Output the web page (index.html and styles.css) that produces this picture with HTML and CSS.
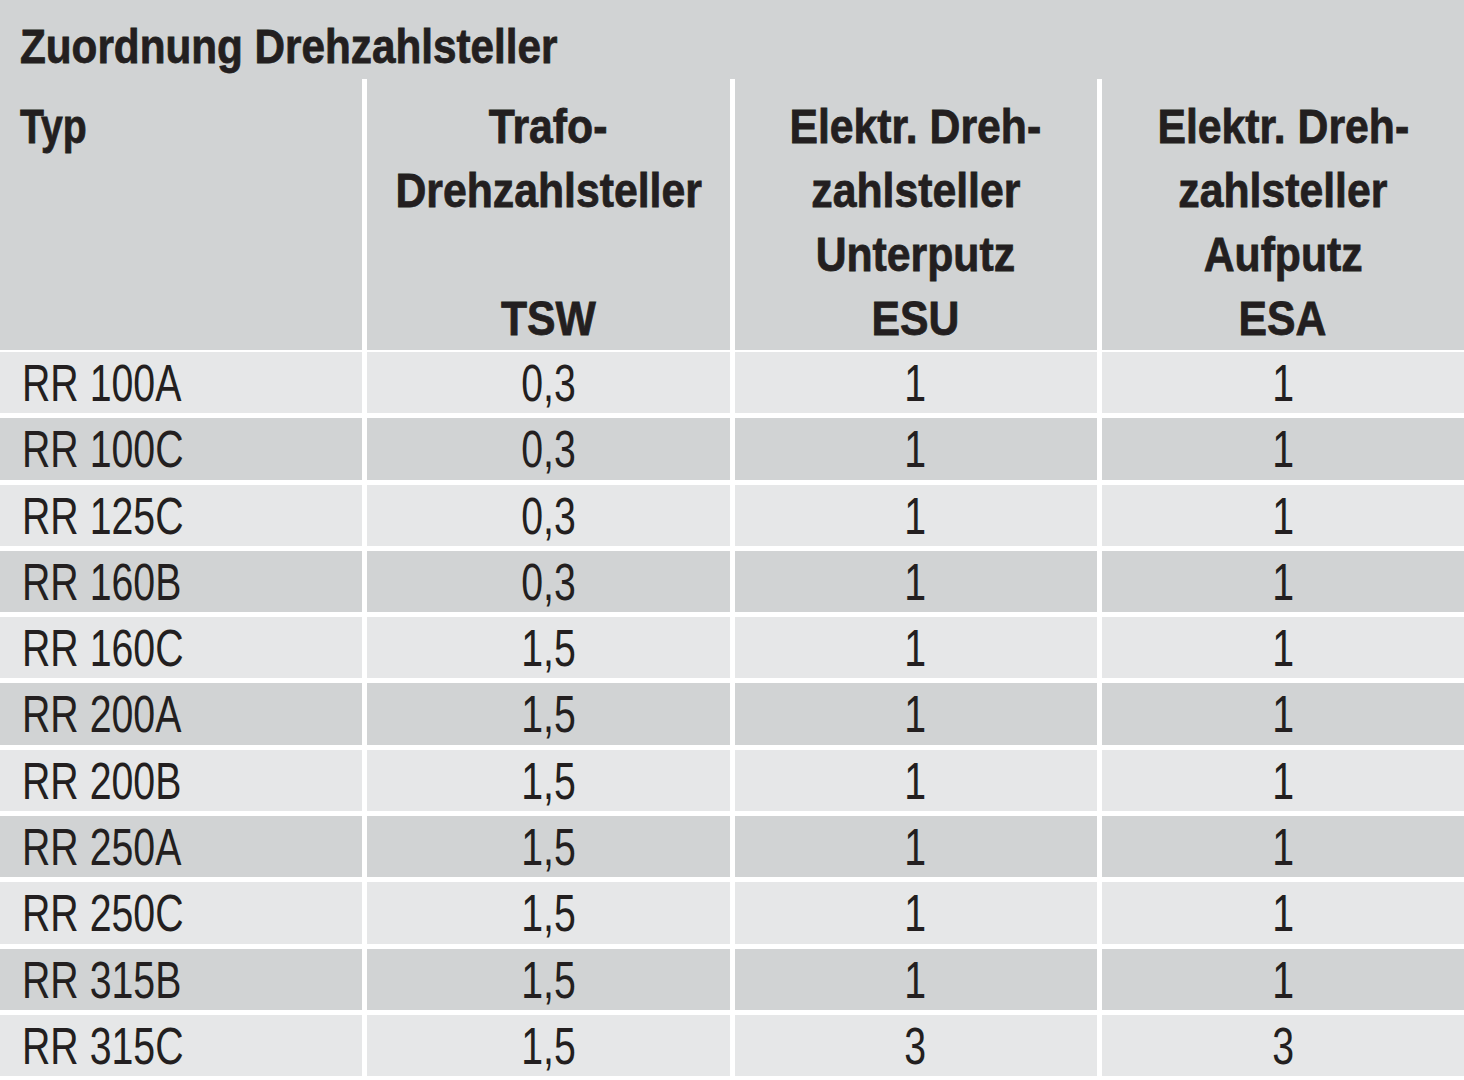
FILE: index.html
```html
<!DOCTYPE html>
<html lang="de">
<head>
<meta charset="utf-8">
<title>Zuordnung Drehzahlsteller</title>
<link rel="stylesheet" href="styles.css">
</head>
<body>
<div class="sheet">
  <div class="head">
    <h1 class="title"><span class="sx">Zuordnung Drehzahlsteller</span></h1>
    <div class="grid head-grid">
      <div class="hcell left"><span class="ln">Typ</span></div>
      <div class="hcell"><span class="ln">Trafo-</span><span class="ln">Drehzahlsteller</span><span class="ln">&nbsp;</span><span class="ln">TSW</span></div>
      <div class="hcell"><span class="ln">Elektr. Dreh-</span><span class="ln">zahlsteller</span><span class="ln">Unterputz</span><span class="ln">ESU</span></div>
      <div class="hcell"><span class="ln">Elektr. Dreh-</span><span class="ln">zahlsteller</span><span class="ln">Aufputz</span><span class="ln">ESA</span></div>
    </div>
  </div>
  <div class="rows">
    <div class="grid row light"><div class="cell left"><span class="v">RR 100A</span></div><div class="cell"><span class="v">0,3</span></div><div class="cell"><span class="v">1</span></div><div class="cell"><span class="v">1</span></div></div>
    <div class="grid row dark"><div class="cell left"><span class="v">RR 100C</span></div><div class="cell"><span class="v">0,3</span></div><div class="cell"><span class="v">1</span></div><div class="cell"><span class="v">1</span></div></div>
    <div class="grid row light"><div class="cell left"><span class="v">RR 125C</span></div><div class="cell"><span class="v">0,3</span></div><div class="cell"><span class="v">1</span></div><div class="cell"><span class="v">1</span></div></div>
    <div class="grid row dark"><div class="cell left"><span class="v">RR 160B</span></div><div class="cell"><span class="v">0,3</span></div><div class="cell"><span class="v">1</span></div><div class="cell"><span class="v">1</span></div></div>
    <div class="grid row light"><div class="cell left"><span class="v">RR 160C</span></div><div class="cell"><span class="v">1,5</span></div><div class="cell"><span class="v">1</span></div><div class="cell"><span class="v">1</span></div></div>
    <div class="grid row dark"><div class="cell left"><span class="v">RR 200A</span></div><div class="cell"><span class="v">1,5</span></div><div class="cell"><span class="v">1</span></div><div class="cell"><span class="v">1</span></div></div>
    <div class="grid row light"><div class="cell left"><span class="v">RR 200B</span></div><div class="cell"><span class="v">1,5</span></div><div class="cell"><span class="v">1</span></div><div class="cell"><span class="v">1</span></div></div>
    <div class="grid row dark"><div class="cell left"><span class="v">RR 250A</span></div><div class="cell"><span class="v">1,5</span></div><div class="cell"><span class="v">1</span></div><div class="cell"><span class="v">1</span></div></div>
    <div class="grid row light"><div class="cell left"><span class="v">RR 250C</span></div><div class="cell"><span class="v">1,5</span></div><div class="cell"><span class="v">1</span></div><div class="cell"><span class="v">1</span></div></div>
    <div class="grid row dark"><div class="cell left"><span class="v">RR 315B</span></div><div class="cell"><span class="v">1,5</span></div><div class="cell"><span class="v">1</span></div><div class="cell"><span class="v">1</span></div></div>
    <div class="grid row light"><div class="cell left"><span class="v">RR 315C</span></div><div class="cell"><span class="v">1,5</span></div><div class="cell"><span class="v">3</span></div><div class="cell"><span class="v">3</span></div></div>
  </div>
</div>
</body>
</html>
```

FILE: styles.css
```css
html, body {
  margin: 0;
  padding: 0;
  background: #ffffff;
}

body {
  width: 1464px;
  height: 1080px;
  overflow: hidden;
  font-family: "Liberation Sans", Arial, sans-serif;
  color: #231f20;
}

.sheet {
  display: flex;
  flex-direction: column;
}

.head {
  background: #d1d3d4;
}

.title {
  margin: 0;
  padding: 14px 0 1px 20px;
  font-size: 49px;
  line-height: 64px;
  font-weight: bold;
  white-space: nowrap;
  -webkit-text-stroke: 0.8px #231f20;
}

.title .sx {
  display: inline-block;
  transform: scaleX(0.862);
  transform-origin: left center;
}

.grid {
  display: grid;
  grid-template-columns: repeat(4, minmax(0, 1fr));
  column-gap: 5px;
  background: #ffffff;
}

.head-grid {
  height: 268px;
}

.hcell {
  background: #d1d3d4;
  display: flex;
  flex-direction: column;
  align-items: center;
  padding-top: 15px;
  font-size: 49px;
  line-height: 64px;
  font-weight: bold;
  -webkit-text-stroke: 0.8px #231f20;
}

.hcell.left {
  align-items: flex-start;
  padding-left: 20px;
}

.ln {
  display: block;
  white-space: nowrap;
  transform: scaleX(0.872);
  transform-origin: center center;
}

.hcell.left .ln {
  transform-origin: left center;
  transform: scaleX(0.8);
}

.rows {
  display: flex;
  flex-direction: column;
  gap: 5px;
  padding-top: 5px;
}

.row {
  height: 61.3px;
}

.cell {
  text-align: center;
  font-size: 51px;
  line-height: 59px;
  padding-top: 2px;
  white-space: nowrap;
}

.cell .v {
  display: inline-block;
  transform: scaleX(0.77);
  transform-origin: center center;
}

.cell.left {
  text-align: left;
  padding-left: 22px;
}

.cell.left .v {
  transform-origin: left center;
}

.light .cell {
  background: #e6e7e8;
}

.dark .cell {
  background: #d1d3d4;
}
```
